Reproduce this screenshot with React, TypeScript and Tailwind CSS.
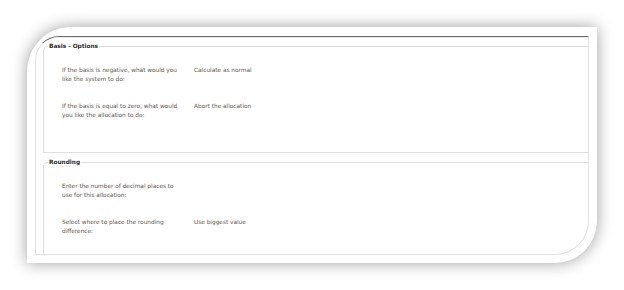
import React from "react";

const font = { fontFamily: '"DejaVu Sans", Verdana, sans-serif' };

function Row({ label, value }: { label: React.ReactNode; value?: string }) {
  return (
    <div className="flex">
      <div className="w-[132px] shrink-0 pr-[12px]">{label}</div>
      <div>{value}</div>
    </div>
  );
}

function Fieldset({
  title,
  children,
  className,
}: {
  title: string;
  children: React.ReactNode;
  className?: string;
}) {
  return (
    <div
      className={
        "relative ml-[7px] border-l border-t border-b border-[#dedede] rounded-tl-[5px] " +
        (className ?? "")
      }
    >
      <div className="absolute left-[4px] top-[-4px] bg-white px-[1px] text-[5.8px] leading-[7px] font-bold text-[#2e2e2e]">
        {title}
      </div>
      {children}
    </div>
  );
}

export default function App() {
  return (
    <div className="w-[624px] h-[290px] bg-white p-[27px]" style={font}>
      <div className="w-[570px] h-[236px] bg-white rounded-tl-[44px] rounded-br-[42px] shadow-[0_0_16px_rgba(0,0,0,0.38)] pt-[9px] pl-[8px] pr-[8px] pb-[8px]">
        <div className="w-[554px] h-[219px] overflow-hidden rounded-tl-[24px] rounded-br-[34px] border-t border-t-[#6f6f6f] border-l border-r border-b border-[#e2e2e2]">
          <div className="h-full border-t border-[#e6e6e6] text-[5.8px] leading-[9px] text-[#5f5852]">
            <Fieldset title="Basis - Options" className="mt-[8px] h-[107px] pt-[19px] pl-[18px]">
              <div className="flex flex-col gap-[18px]">
                <Row
                  label={
                    <>
                      If the basis is negative, what would you
                      <br />
                      like the system to do:
                    </>
                  }
                  value="Calculate as normal"
                />
                <Row
                  label={
                    <>
                      If the basis is equal to zero, what would
                      <br />
                      you like the allocation to do:
                    </>
                  }
                  value="Abort the allocation"
                />
              </div>
            </Fieldset>
            <Fieldset title="Rounding" className="mt-[9px] h-[120px] pt-[19px] pl-[18px]">
              <div className="flex flex-col gap-[18px]">
                <Row
                  label={
                    <>
                      Enter the number of decimal places to
                      <br />
                      use for this allocation:
                    </>
                  }
                />
                <Row
                  label={
                    <>
                      Select where to place the rounding
                      <br />
                      difference:
                    </>
                  }
                  value="Use biggest value"
                />
              </div>
            </Fieldset>
          </div>
        </div>
      </div>
    </div>
  );
}
